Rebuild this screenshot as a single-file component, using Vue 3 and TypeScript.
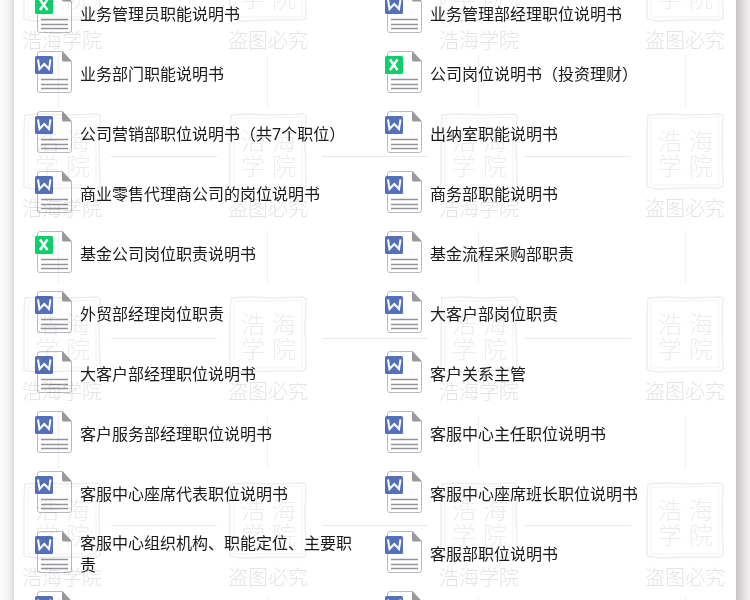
<script setup lang="ts">
type FileKind = 'word' | 'excel'

interface DocFile {
  name: string
  kind: FileKind
}

const word = (name: string): DocFile => ({ name, kind: 'word' })
const excel = (name: string): DocFile => ({ name, kind: 'excel' })

const files: DocFile[] = [
  excel('业务管理员职能说明书'),
  word('业务管理部经理职位说明书'),
  word('业务部门职能说明书'),
  excel('公司岗位说明书（投资理财）'),
  word('公司营销部职位说明书（共7个职位）'),
  word('出纳室职能说明书'),
  word('商业零售代理商公司的岗位说明书'),
  word('商务部职能说明书'),
  excel('基金公司岗位职责说明书'),
  word('基金流程采购部职责'),
  word('外贸部经理岗位职责'),
  word('大客户部岗位职责'),
  word('大客户部经理职位说明书'),
  word('客户关系主管'),
  word('客户服务部经理职位说明书'),
  word('客服中心主任职位说明书'),
  word('客服中心座席代表职位说明书'),
  word('客服中心座席班长职位说明书'),
  word('客服中心组织机构、职能定位、主要职责'),
  word('客服部职位说明书'),
  word('客服经理职位说明书'),
  word('客服专员职位说明书'),
]

const stampColumns = [
  { x: 22, post: 58, label: '浩海学院' },
  { x: 228, post: 267, label: '盗图必究' },
  { x: 439, post: 478, label: '浩海学院' },
  { x: 645, post: 685, label: '盗图必究' },
]
const stampRows = [-55, 113, 296, 482]
const ruleRows = [157, 339, 526]
const ruleColumns = [111, 322, 525]
const postRows = [55, 231, 416, 597]
</script>

<template>
  <main class="page">
    <section class="sheet">
      <ul class="files">
        <li v-for="file in files" :key="file.name">
          <a class="file" href="#">
            <svg class="icon" viewBox="0 0 38 46" aria-hidden="true">
              <path
                d="M5.500 .5H27.500L36.500 10.500V39.500Q36.500 41.500 34 41.500H5Q2.500 41.500 2.500 39.500V3Q2.500 .5 5.500 .5Z"
                fill="#fff"
                stroke="#b9b9c0"
              />
              <path d="M27 0L37 10.500H28.500Q27 10.500 27 9Z" fill="#98989e" />
              <path d="M6 28.500H33M6 33.500H33M6 37.500H33" stroke="#94949a" stroke-width="1.500" />
              <rect
                x="0"
                y="5"
                width="18"
                height="18"
                rx="1.500"
                :fill="file.kind === 'word' ? '#5470b8' : '#11cd6b'"
              />
              <path
                v-if="file.kind === 'word'"
                d="M3 8.500L4.500 18L9.300 13L14 18L15.500 8.500"
                fill="none"
                stroke="#fff"
                stroke-width="2"
              />
              <path v-else d="M5 8.500L12.500 19M12.500 8.500L5 19" stroke="#fff" stroke-width="2.500" />
            </svg>
            <span class="name">{{ file.name }}</span>
          </a>
        </li>
      </ul>
    </section>

    <svg class="watermark" width="750" height="600" viewBox="0 0 750 600" aria-hidden="true">
      <g fill="none" stroke="#e9e9e9">
        <template v-for="y in ruleRows" :key="y">
          <path v-for="x in ruleColumns" :key="x" :d="`M${x} ${y - 0.5}h106`" />
        </template>
        <template v-for="y in postRows" :key="y">
          <path v-for="column in stampColumns" :key="column.x" :d="`M${column.post + 0.5} ${y}v52`" stroke="#f0f0f0" />
        </template>
      </g>
      <template v-for="y in stampRows" :key="y">
        <g v-for="column in stampColumns" :key="column.x" :transform="`translate(${column.x} ${y})`">
          <path
            d="M3 2L20 1L45 2L75 1L78 3L77 30L78 73L75 75L42 75L12 76L2 74L2 45L2 20Z"
            fill="none"
            stroke="#eeeeee"
            stroke-width="1.500"
          />
          <path d="M6 5L40 5L74 4L74 40L74 72L35 72L6 72L6 40Z" fill="none" stroke="#f3f3f3" />
          <text class="seal" x="13" y="37">浩</text>
          <text class="seal" x="44" y="37">海</text>
          <text class="seal" x="13" y="62">学</text>
          <text class="seal" x="44" y="62">院</text>
          <text class="label" x="0" y="103">{{ column.label }}</text>
        </g>
      </template>
    </svg>
  </main>
</template>

<style>
body {
  margin: 0;
}
</style>

<style scoped>
.page {
  position: relative;
  height: 100vh;
  overflow: hidden;
  padding: 0 14px;
  background:
    linear-gradient(to right, #fcfcfc, #f3f3f3 8px, #dcdcdc 14px, transparent 14px),
    linear-gradient(to left, #f4f0f1, #e6e2e3 5px, #c8c5c7 14px, transparent 14px),
    #fff;
  font-family: 'Noto Sans', 'Noto Sans CJK SC', sans-serif;
}

.sheet {
  background: #fff;
}

.files {
  display: grid;
  grid-template-columns: 1fr 1fr;
  grid-auto-rows: 60px;
  margin: 0;
  padding: 0 1px 0 21px;
  list-style: none;
  /* scrolled so the first row starts partly out of view */
  transform: translateY(-16px);
}

.file {
  display: flex;
  align-items: center;
  gap: 7px;
  height: 60px;
  padding-right: 20px;
  color: #1a1a1a;
  text-decoration: none;
}

.icon {
  flex: none;
  width: 38px;
  height: 46px;
}

.name {
  font-size: 16px;
  line-height: 22px;
}

.watermark {
  position: absolute;
  top: 0;
  left: 0;
  pointer-events: none;
  mix-blend-mode: multiply;
}

.seal,
.label {
  font-family: 'Noto Sans CJK SC', sans-serif;
  font-weight: 300;
}

.seal {
  font-size: 24px;
  fill: #ececec;
}

.label {
  font-size: 20px;
  fill: #e4e4e4;
}
</style>
